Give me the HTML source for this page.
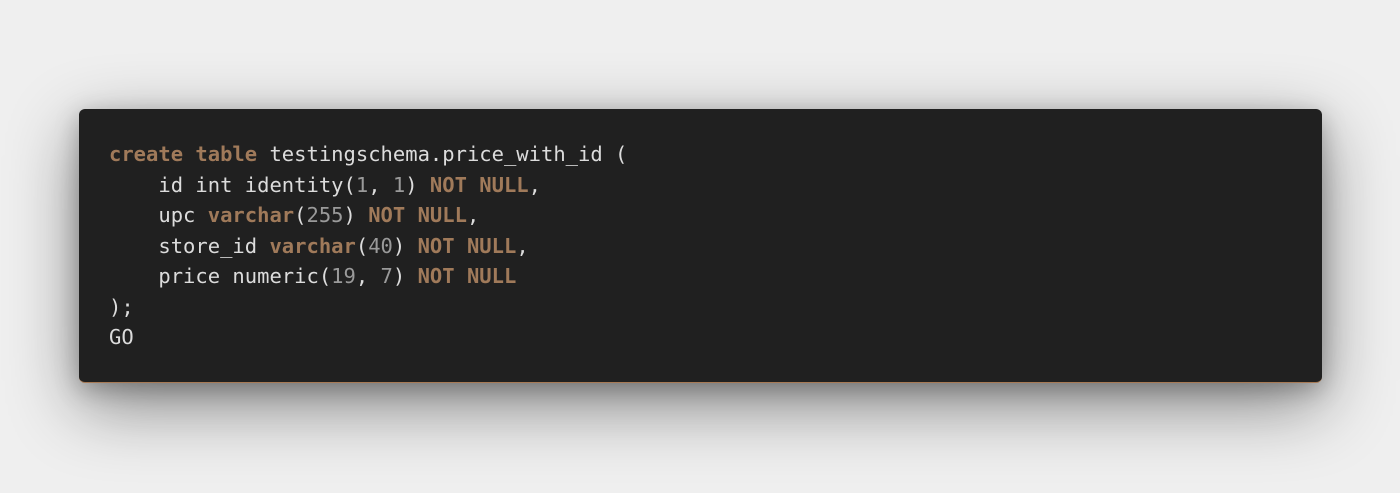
<!DOCTYPE html>
<html><head><style>
html,body{margin:0;padding:0;width:1400px;height:493px;background:#efefef;overflow:hidden;}
.card{position:absolute;left:79px;top:109px;width:1243px;height:274px;background:#202020;border-radius:6px;
box-shadow:0 22px 70px rgba(0,0,0,0.45),0 6px 24px rgba(0,0,0,0.25);border-bottom:1px solid #a77a55;box-sizing:border-box;}
pre{margin:0;position:absolute;left:30px;top:30px;font-family:"DejaVu Sans Mono","Liberation Mono",monospace;font-size:20.5px;line-height:30.5px;color:#dcdcdc;}
.k{color:#a07a5a;font-weight:bold;}
.n{color:#9a9a9a;}
</style></head><body>
<div class="card"><pre><span class="k">create</span> <span class="k">table</span> testingschema.price_with_id (
    id int identity(<span class="n">1</span>, <span class="n">1</span>) <span class="k">NOT</span> <span class="k">NULL</span>,
    upc <span class="k">varchar</span>(<span class="n">255</span>) <span class="k">NOT</span> <span class="k">NULL</span>,
    store_id <span class="k">varchar</span>(<span class="n">40</span>) <span class="k">NOT</span> <span class="k">NULL</span>,
    price numeric(<span class="n">19</span>, <span class="n">7</span>) <span class="k">NOT</span> <span class="k">NULL</span>
);
GO</pre></div>
</body></html>
